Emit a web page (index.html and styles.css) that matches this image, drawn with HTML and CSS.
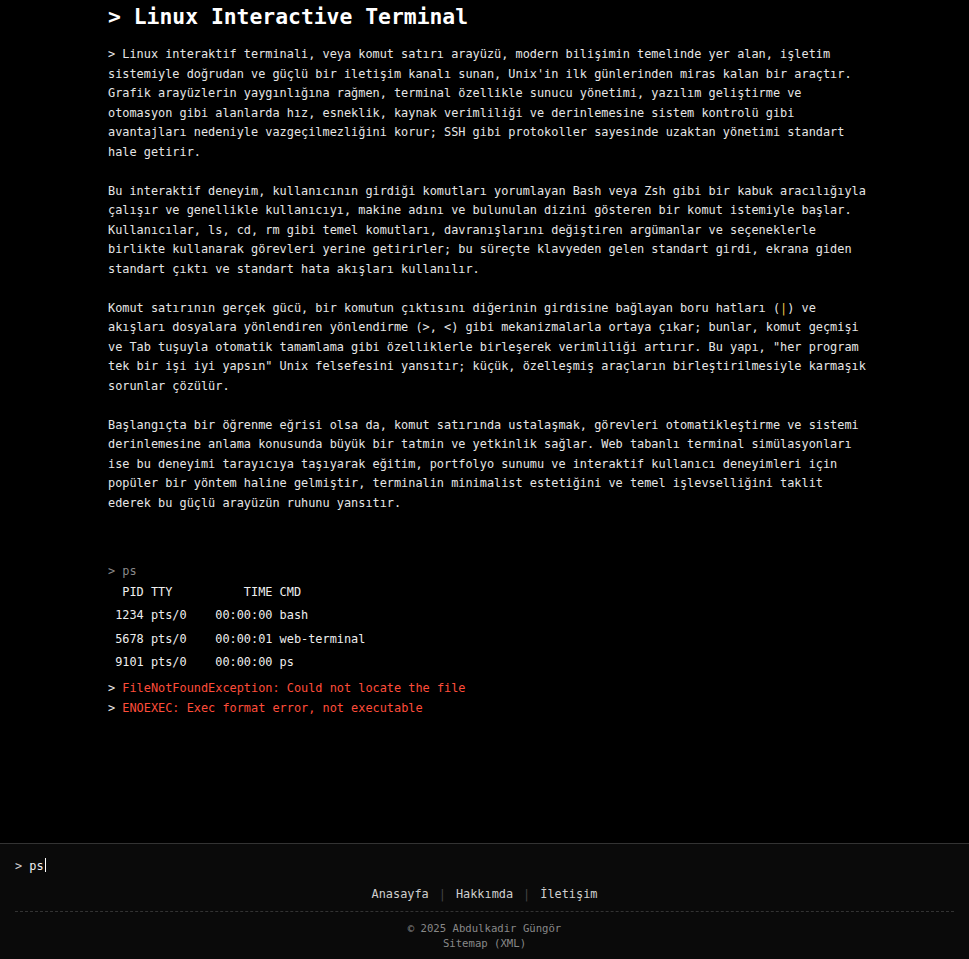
FILE: index.html
```html
<!DOCTYPE html>
<html lang="tr">
<head>
<meta charset="utf-8">
<title>Linux Interactive Terminal</title>
<link rel="stylesheet" href="styles.css">
</head>
<body>
<div class="app">
  <main class="screen">
    <div class="content">
      <h1 class="title">&gt; Linux Interactive Terminal</h1>
      <p>&gt; Linux interaktif terminali, veya komut satırı arayüzü, modern bilişimin temelinde yer alan, işletim sistemiyle doğrudan ve güçlü bir iletişim kanalı sunan, Unix'in ilk günlerinden miras kalan bir araçtır. Grafik arayüzlerin yaygınlığına rağmen, terminal özellikle sunucu yönetimi, yazılım geliştirme ve otomasyon gibi alanlarda hız, esneklik, kaynak verimliliği ve derinlemesine sistem kontrolü gibi avantajları nedeniyle vazgeçilmezliğini korur; SSH gibi protokoller sayesinde uzaktan yönetimi standart hale getirir.</p>
      <p>Bu interaktif deneyim, kullanıcının girdiği komutları yorumlayan Bash veya Zsh gibi bir kabuk aracılığıyla çalışır ve genellikle kullanıcıyı, makine adını ve bulunulan dizini gösteren bir komut istemiyle başlar. Kullanıcılar, ls, cd, rm gibi temel komutları, davranışlarını değiştiren argümanlar ve seçeneklerle birlikte kullanarak görevleri yerine getirirler; bu süreçte klavyeden gelen standart girdi, ekrana giden standart çıktı ve standart hata akışları kullanılır.</p>
      <p>Komut satırının gerçek gücü, bir komutun çıktısını diğerinin girdisine bağlayan boru hatları (<span class="pipe">|</span>) ve akışları dosyalara yönlendiren yönlendirme (&gt;, &lt;) gibi mekanizmalarla ortaya çıkar; bunlar, komut geçmişi ve Tab tuşuyla otomatik tamamlama gibi özelliklerle birleşerek verimliliği artırır. Bu yapı, "her program tek bir işi iyi yapsın" Unix felsefesini yansıtır; küçük, özelleşmiş araçların birleştirilmesiyle karmaşık sorunlar çözülür.</p>
      <p>Başlangıçta bir öğrenme eğrisi olsa da, komut satırında ustalaşmak, görevleri otomatikleştirme ve sistemi derinlemesine anlama konusunda büyük bir tatmin ve yetkinlik sağlar. Web tabanlı terminal simülasyonları ise bu deneyimi tarayıcıya taşıyarak eğitim, portfolyo sunumu ve interaktif kullanıcı deneyimleri için popüler bir yöntem haline gelmiştir, terminalin minimalist estetiğini ve temel işlevselliğini taklit ederek bu güçlü arayüzün ruhunu yansıtır.</p>

      <div class="history">
        <div class="cmd">&gt; ps</div>
        <pre class="out">  PID TTY          TIME CMD
 1234 pts/0    00:00:00 bash
 5678 pts/0    00:00:01 web-terminal
 9101 pts/0    00:00:00 ps</pre>
        <div class="err first"><span class="mark">&gt;</span> <span class="msg">FileNotFoundException: Could not locate the file</span></div>
        <div class="err"><span class="mark">&gt;</span> <span class="msg">ENOEXEC: Exec format error, not executable</span></div>
      </div>
    </div>
  </main>

  <div class="inputbar"><span class="prompt">&gt;</span> <span class="typed">ps</span><span class="cursor"></span></div>

  <footer class="footer">
    <nav class="links">
      <a href="#" class="link">Anasayfa</a><span class="sep">|</span><a href="#" class="link">Hakkımda</a><span class="sep">|</span><a href="#" class="link">İletişim</a>
    </nav>
    <div class="meta">
      <div class="copy">© 2025 Abdulkadir Güngör</div>
      <a href="#" class="sitemap">Sitemap (XML)</a>
    </div>
  </footer>
</div>
</body>
</html>
```

FILE: styles.css
```css
html, body {
  margin: 0;
  padding: 0;
  background: #000;
}

body {
  font-family: "DejaVu Sans Mono", "Liberation Mono", monospace;
  font-size: 11.88px;
  line-height: 19.5px;
  color: #e6e6e6;
}

.app {
  height: 100vh;
  display: flex;
  flex-direction: column;
}

.screen {
  flex: 1;
  overflow: hidden;
  background: #000;
}

.content {
  width: 762px;
  padding-left: 108px;
}

.title {
  margin: 0 0 11px;
  font-size: 21.36px;
  line-height: 34px;
  font-weight: bold;
  color: #fff;
}

.content p {
  margin: 0 0 19.5px;
}

.pipe {
  color: #f2c744;
}

.history {
  margin-top: 48.5px;
}

.cmd {
  color: #8a8a8a;
}

.out {
  margin: 0;
  font: inherit;
  line-height: 23.4px;
  color: #eeeeee;
  white-space: pre;
}

.err {
  line-height: 20px;
}

.err.first {
  margin-top: 3.6px;
}

.err .mark {
  color: #e6e6e6;
}

.err .msg {
  color: #ff4d3a;
}

.inputbar {
  border-top: 1px solid #333;
  background: #0a0a0a;
  padding: 13px 15px 0;
  height: 19.5px;
  line-height: 19.5px;
  color: #f0f0f0;
}

.prompt {
  color: #d0d0d0;
}

.cursor {
  display: inline-block;
  width: 1px;
  height: 14px;
  background: #fff;
  margin-left: 1px;
  vertical-align: -2px;
}

.footer {
  background: #0a0a0a;
  padding: 8.75px 15px 8.25px;
}

.links {
  display: flex;
  justify-content: center;
  padding-bottom: 6px;
}

.link {
  color: #cfcfcf;
  text-decoration: none;
}

.sep {
  color: #444;
  margin: 0 10px;
}

.meta {
  border-top: 1px dashed #333;
  padding-top: 9px;
  display: flex;
  flex-direction: column;
  align-items: center;
  font-size: 10.63px;
  line-height: 15px;
  color: #888;
}

.sitemap {
  color: #888;
  text-decoration: none;
}
```
